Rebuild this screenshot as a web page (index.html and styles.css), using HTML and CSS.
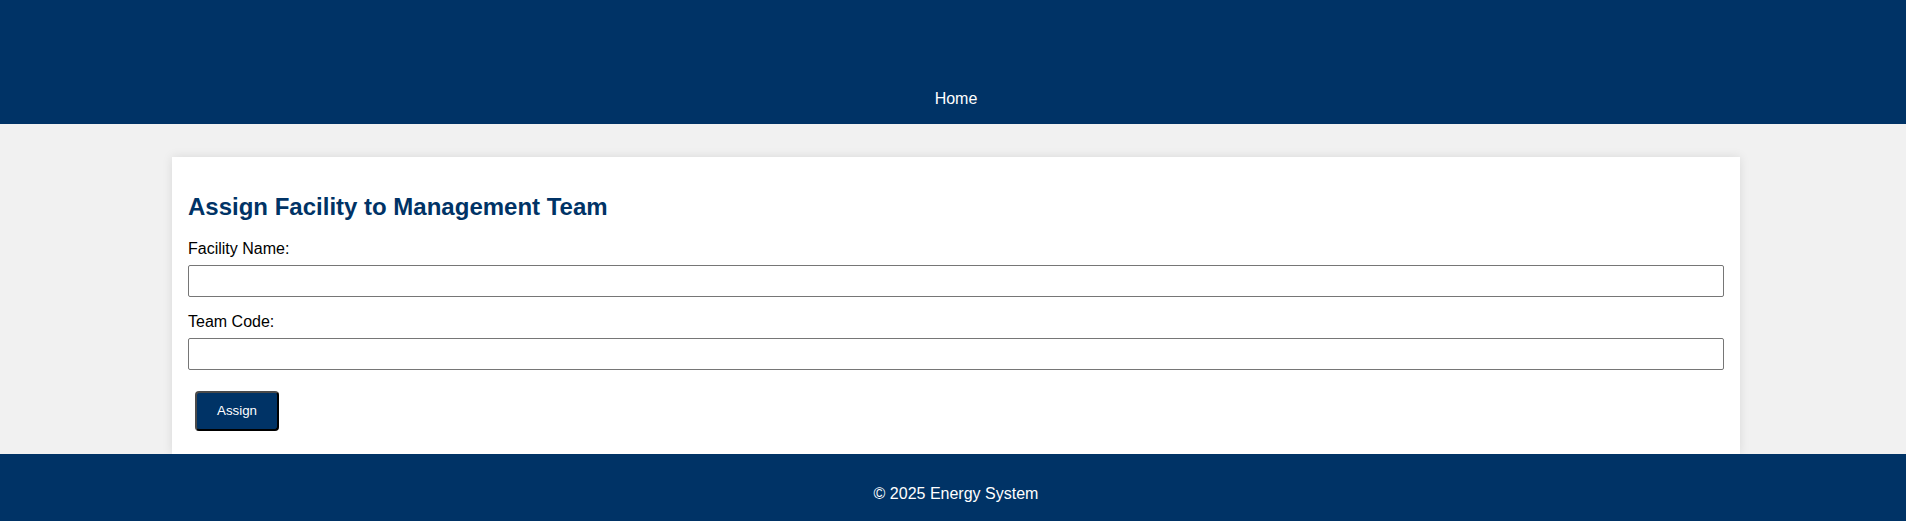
FILE: index.html
```html
<!DOCTYPE html>
<html lang="en">
<head>
<meta charset="utf-8">
<title>Assign Facility to Management Team</title>
<link rel="stylesheet" href="styles.css">
</head>
<body>
<header class="site-header">
  <nav class="site-nav">
    <a class="nav-link" href="#">Home</a>
  </nav>
</header>
<main class="main">
  <section class="card">
    <h2 class="card-title">Assign Facility to Management Team</h2>
    <form class="form">
      <label class="field-label" for="facility">Facility Name:</label>
      <input class="field-input" id="facility" type="text">
      <label class="field-label" for="team">Team Code:</label>
      <input class="field-input" id="team" type="text">
      <button class="btn" type="button">Assign</button>
    </form>
  </section>
</main>
<footer class="site-footer">
  <p class="footer-text">© 2025 Energy System</p>
</footer>
</body>
</html>
```
FILE: styles.css
```css
html, body {
  margin: 0;
  padding: 0;
}
body {
  font-family: "Liberation Sans", Arial, sans-serif;
  font-size: 16px;
  background: #f1f1f1;
  color: #000;
}
.site-header {
  background: #003366;
  height: 124px;
  box-sizing: border-box;
  padding: 90px 0 0 6px;
}
.site-nav {
  display: flex;
  justify-content: center;
}
.nav-link {
  color: #fff;
  text-decoration: none;
  line-height: 18px;
}
.main {
  padding: 33px 166px 0 172px;
}
.card {
  background: #fff;
  padding: 16px;
  box-shadow: 0 0 10px rgba(0, 0, 0, 0.1);
}
.card-title {
  margin: 20px 0 20px 0;
  font-size: 24px;
  line-height: 27px;
  font-weight: bold;
  color: #003366;
}
.form {
  display: flex;
  flex-direction: column;
  align-items: flex-start;
}
.field-label {
  display: block;
  line-height: 18px;
  margin: 0 0 7px 0;
}
.field-input {
  box-sizing: border-box;
  width: 100%;
  height: 32px;
  margin: 0 0 16px 0;
  border: 1px solid #767676;
  border-radius: 2px;
  padding: 4px 8px;
  font-family: "Liberation Sans", Arial, sans-serif;
  font-size: 14px;
  background: #fff;
}
.btn {
  margin: 5px 0 7px 7px;
  padding: 10px 20px;
  line-height: 16px;
  font-family: "Liberation Sans", Arial, sans-serif;
  font-size: 13.333px;
  color: #fff;
  background: #003366;
  border: 2px solid;
  border-color: #4a4a4a #000 #000 #4a4a4a;
  border-radius: 4px;
  cursor: pointer;
}
.site-footer {
  background: #003366;
  color: #fff;
  text-align: center;
  padding: 31px 0 30px 6px;
}
.footer-text {
  margin: 0;
  line-height: 18px;
}
```
